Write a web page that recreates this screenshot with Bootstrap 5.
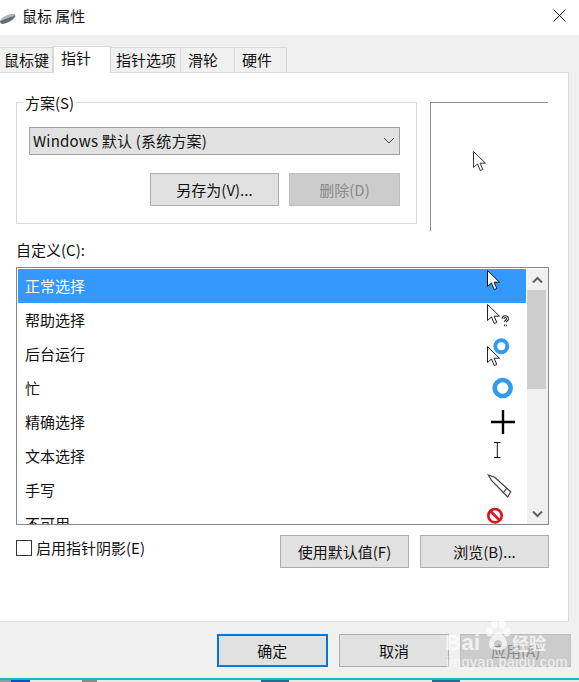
<!DOCTYPE html>
<html lang="zh">
<head>
<meta charset="utf-8">
<title>鼠标 属性</title>
<link href="https://cdn.jsdelivr.net/npm/bootstrap@5.3.0/dist/css/bootstrap.min.css" rel="stylesheet">
<style>
html,body{height:682px;overflow:hidden}
body{font-family:"Noto Sans CJK SC","Liberation Sans",sans-serif;font-size:15px;line-height:20px;color:#111;background:#f0f0f0;position:relative}
.dlg-title{height:35px;background:#fff;padding:0 0 4px 22px;font-size:15px}
.dlg-title .logo{position:absolute;left:0;top:13px}
.dlg-close{margin-right:13px}
.dlg-tabs{height:37px;background:#f0f0f0;border:0;padding:0;flex-wrap:nowrap}
.dlg-tabs .nav-link{height:25px;margin:0;padding:0;border:1px solid #d9d9d9;border-bottom:0;border-left:0;border-radius:0;background:#f0f0f0;color:#111;text-align:left;line-height:24px}
.dlg-tabs .nav-link.active{height:27px;background:#fff;border:1px solid #d9d9d9;border-bottom:0;color:#111;line-height:22px;position:relative;top:1px;z-index:2}
.t1{width:53px;padding-left:4px!important}.t2{width:58px;padding-left:7px!important}.t3{width:70px;padding-left:5px!important}.t4{width:54px;padding-left:7px!important}.t5{width:52px;padding-left:7px!important}
.dlg-panel{height:550px;width:569px;background:#fff;border-top:1px solid #d9d9d9;border-right:1px solid #d9d9d9;border-bottom:1px solid #d9d9d9;padding:29px 0 0 16px}
.scheme-box{width:401px;height:122px;border:1px solid #d9d9d9;position:relative;padding:24px 16px 0 12px}
.scheme-legend{position:absolute;left:6px;top:-9px;background:#fff;padding:0 2px;line-height:18px}
.scheme-select{height:28px;padding:0 0 0 3px;border:1px solid #a0a0a0;border-radius:0;background-color:#e1e1e1;background-image:none;font-size:15px;line-height:26px;color:#111;letter-spacing:.2px;position:relative}
.scheme-arrow{position:absolute;right:4px;top:9px}
.scheme-actions{margin-top:18px;gap:10px}
.win-btn{height:33px;padding:0;border:1px solid #adadad;border-radius:0;background:#e1e1e1;color:#111;font-size:15px;line-height:30px}
.win-btn:disabled{background:#cccccc;border-color:#bfbfbf;color:#8a8a8a;opacity:1}
.w129{width:129px}.w111{width:111px}
.preview-box{width:118px;height:129px;margin-left:13px;border-top:1px solid #8f8f8f;border-left:1px solid #8f8f8f;position:relative}
.preview-box svg{position:absolute;left:42px;top:48px}
.custom-label{margin:9px 0 7px;line-height:20px}
.cursor-list{width:533px;height:258px;border:1px solid #828790;position:relative;overflow:hidden;background:#fff;padding:1px 0 0 1px}
.cursor-rows{width:508px;height:255px;overflow:hidden;border-radius:0}
.cursor-rows .list-group-item{height:34px;flex:none;padding:0 0 0 7px;border:0;border-radius:0;color:#111;line-height:34px;background:transparent}
.cursor-rows .list-group-item.active{background:#3399ff;color:#fff}
.cursor-rows svg{flex:none;overflow:visible}
.scroll-col{width:21px;height:255px;background:#f0f0f0;margin-left:1px}
.scroll-up,.scroll-down{height:21px}
.scroll-thumb{height:99px;background:#cdcdcd;width:19px}
.shadow-check{margin:10px 0 0 0;height:33px;width:533px}
.win-check{width:16px;height:16px;border:1px solid #333;background:#fff;margin:5px 4px 0 0;flex:none}
.check-text{margin-top:3px}
.pair-btns{gap:11px}
.dlg-foot{height:56px;padding:12px 8px 0 217px;gap:11px;background:#f0f0f0}
.win-btn.is-default{border:2px solid #0078d7}
.win-strip{height:4px;background:#e8e8e8;border-top:2px solid #17b8c8;gap:0}
.strip-bit{height:2px;flex:none}
.bit-a{width:11px;background:#9a9a9a}.bit-b{width:19px;background:#0a50c8}.bit-c{width:15px;margin-left:52px;background:#8a8a8a}.bit-d{width:28px;margin-left:164px;background:#2a6a8a}.bit-e{width:28px;margin-left:143px;background:#2a6a8a}
.bd-mark{position:absolute;left:443px;top:617px;width:110px;height:56px;color:rgba(255,255,255,.72);z-index:5;pointer-events:none}
.bd-mark .bai{position:absolute;left:2px;top:13px;font:700 22px/26px "Liberation Sans",sans-serif;letter-spacing:.5px}
.bd-mark .jy{position:absolute;left:69px;top:15px;font-size:17px;line-height:22px;font-weight:700}
.bd-mark .url{position:absolute;left:3px;top:37px;font:14.500px/16px "Liberation Sans",sans-serif;letter-spacing:.3px}
.bd-mark svg{position:absolute;left:42px;top:2px}
</style>
</head>
<body>
<div class="dlg-title d-flex align-items-center justify-content-between">
  <svg class="logo" width="16" height="12" viewBox="0 0 16 12"><path d="M0 8 C2 5 8 2 13 1 C15 1 16 3 15 4 C12 8 7 10 3 11 C1 11 0 10 0 8Z" fill="#646c74"/><path d="M1 6 C4 3 9 1 13 1 C15 1 15 2 14 3 C10 4 5 6 1 8Z" fill="#aeb5bb"/></svg>
  <span>鼠标 属性</span>
  <svg class="dlg-close" width="13" height="13" viewBox="0 0 13 13"><path d="M.5.5l12 12M12.500.5l-12 12" stroke="#111" stroke-width="1" fill="none"/></svg>
</div>
<ul class="nav nav-tabs dlg-tabs align-items-end">
  <li class="nav-item"><a class="nav-link t1" href="#">鼠标键</a></li>
  <li class="nav-item"><a class="nav-link active t2" href="#">指针</a></li>
  <li class="nav-item"><a class="nav-link t3" href="#">指针选项</a></li>
  <li class="nav-item"><a class="nav-link t4" href="#">滑轮</a></li>
  <li class="nav-item"><a class="nav-link t5" href="#">硬件</a></li>
</ul>
<div class="dlg-panel">
  <div class="d-flex align-items-start">
    <div class="scheme-box">
      <span class="scheme-legend">方案(S)</span>
      <div class="form-select scheme-select">Windows 默认 (系统方案)
        <svg class="scheme-arrow" width="12" height="8" viewBox="0 0 12 8"><path d="M1 1l5 5 5-5" stroke="#444" fill="none"/></svg>
      </div>
      <div class="d-flex justify-content-end scheme-actions">
        <button class="btn win-btn w129" type="button">另存为(V)...</button>
        <button class="btn win-btn w111" type="button" disabled>删除(D)</button>
      </div>
    </div>
    <div class="preview-box">
      <svg width="14" height="21" viewBox="0 0 14 21"><path d="M.5.5v16l4-3.500 2.700 6.500 2.600-1-2.700-6.300h5.400z" fill="#fff" stroke="#333"/></svg>
    </div>
  </div>
  <div class="custom-label">自定义(C):</div>
  <div class="cursor-list d-flex">
    <div class="list-group cursor-rows">
      <div class="list-group-item active d-flex justify-content-between">正常选择
        <svg width="60" height="34"><path d="M21.500 1.500v16l4-3.500 2.700 6.500 2.600-1-2.700-6.300h5.400z" fill="#fff" stroke="#111"/></svg></div>
      <div class="list-group-item d-flex justify-content-between">帮助选择
        <svg width="60" height="34"><path d="M21.500 1.500v16l4-3.500 2.700 6.500 2.600-1-2.700-6.300h5.400z" fill="#fff" stroke="#222"/><path d="M37 16c0-1.500 1-2.300 2.300-2.300s2.500.9 2.300 2.300c-.2 1.300-2 1.500-2.200 3.200M39.300 21.500v1.800" fill="none" stroke="#222" stroke-width="2.800"/><path d="M37 16c0-1.500 1-2.300 2.300-2.300s2.500.9 2.300 2.300c-.2 1.300-2 1.500-2.200 3.200M39.300 21.500v1.800" fill="none" stroke="#fff" stroke-width="1"/></svg></div>
      <div class="list-group-item d-flex justify-content-between">后台运行
        <svg width="60" height="34"><path d="M21.500 9.500v16l4-3.500 2.700 6.500 2.600-1-2.700-6.300h5.400z" fill="#fff" stroke="#222"/><circle cx="35.300" cy="9.300" r="6" fill="#fff" stroke="#2f9cf0" stroke-width="4"/></svg></div>
      <div class="list-group-item d-flex justify-content-between">忙
        <svg width="60" height="34"><circle cx="36.700" cy="17" r="8" fill="#fff" stroke="#2f9cf0" stroke-width="4.600"/></svg></div>
      <div class="list-group-item d-flex justify-content-between">精确选择
        <svg width="60" height="34"><path d="M37 5v24M25 17h24" stroke="#000" stroke-width="2.400"/></svg></div>
      <div class="list-group-item d-flex justify-content-between">文本选择
        <svg width="60" height="34"><path d="M28 3.500h6.500M28 18.500h6.500M31.300 3.500v15" stroke="#111" fill="none"/></svg></div>
      <div class="list-group-item d-flex justify-content-between">手写
        <svg width="60" height="34"><path d="M22.300 2l6.400 2.300 16 14.400-3 5.300-16-16.300zM41 15l-4 5" fill="#fff" stroke="#3d4048" stroke-width="1.200"/></svg></div>
      <div class="list-group-item d-flex justify-content-between">不可用
        <svg width="60" height="34"><circle cx="29" cy="8.700" r="6.700" fill="#fff" stroke="#e0101c" stroke-width="2.600"/><path d="M24.300 4l9.400 9.400" stroke="#e0101c" stroke-width="2.600"/></svg></div>
    </div>
    <div class="scroll-col d-flex flex-column">
      <div class="scroll-up d-flex align-items-center justify-content-center"><svg width="11" height="8" viewBox="0 0 11 8"><path d="M1 6.500l4.500-4.500 4.500 4.500" stroke="#606060" stroke-width="2" fill="none"/></svg></div>
      <div class="scroll-thumb"></div>
      <div class="flex-grow-1"></div>
      <div class="scroll-down d-flex align-items-center justify-content-center"><svg width="11" height="8" viewBox="0 0 11 8"><path d="M1 1.500l4.500 4.500 4.500-4.500" stroke="#606060" stroke-width="2" fill="none"/></svg></div>
    </div>
  </div>
  <div class="d-flex shadow-check align-items-start">
    <span class="win-check"></span><span class="check-text">启用指针阴影(E)</span>
    <div class="ms-auto d-flex pair-btns">
      <button class="btn win-btn w129" type="button">使用默认值(F)</button>
      <button class="btn win-btn w129" type="button">浏览(B)...</button>
    </div>
  </div>
</div>
<div class="d-flex dlg-foot">
  <button class="btn win-btn w111 is-default" type="button">确定</button>
  <button class="btn win-btn w111" type="button">取消</button>
  <button class="btn win-btn w111" type="button" disabled>应用(A)</button>
</div>
<div class="win-strip d-flex">
  <span class="strip-bit bit-a"></span><span class="strip-bit bit-b"></span><span class="strip-bit bit-c"></span><span class="strip-bit bit-d"></span><span class="strip-bit bit-e"></span>
</div>
<div class="bd-mark">
  <span class="bai">Bai</span>
  <svg width="26" height="32" viewBox="0 0 26 32" fill="currentColor"><ellipse cx="4.500" cy="13" rx="3.500" ry="4.500"/><ellipse cx="9.500" cy="5" rx="3.500" ry="4.500"/><ellipse cx="17" cy="5" rx="3.500" ry="4.500"/><ellipse cx="22" cy="13" rx="3.500" ry="4.500"/><path d="M13 13c4 0 9 7 9 12s-4 6-9 6-9-1-9-6 5-12 9-12zm0 8a4 4 0 1 0 .01 0z" fill-rule="evenodd"/></svg>
  <span class="jy">经验</span>
  <span class="url">jingyan.baidu.com</span>
</div>
<script src="https://cdn.jsdelivr.net/npm/bootstrap@5.3.0/dist/js/bootstrap.bundle.min.js"></script>
</body>
</html>
